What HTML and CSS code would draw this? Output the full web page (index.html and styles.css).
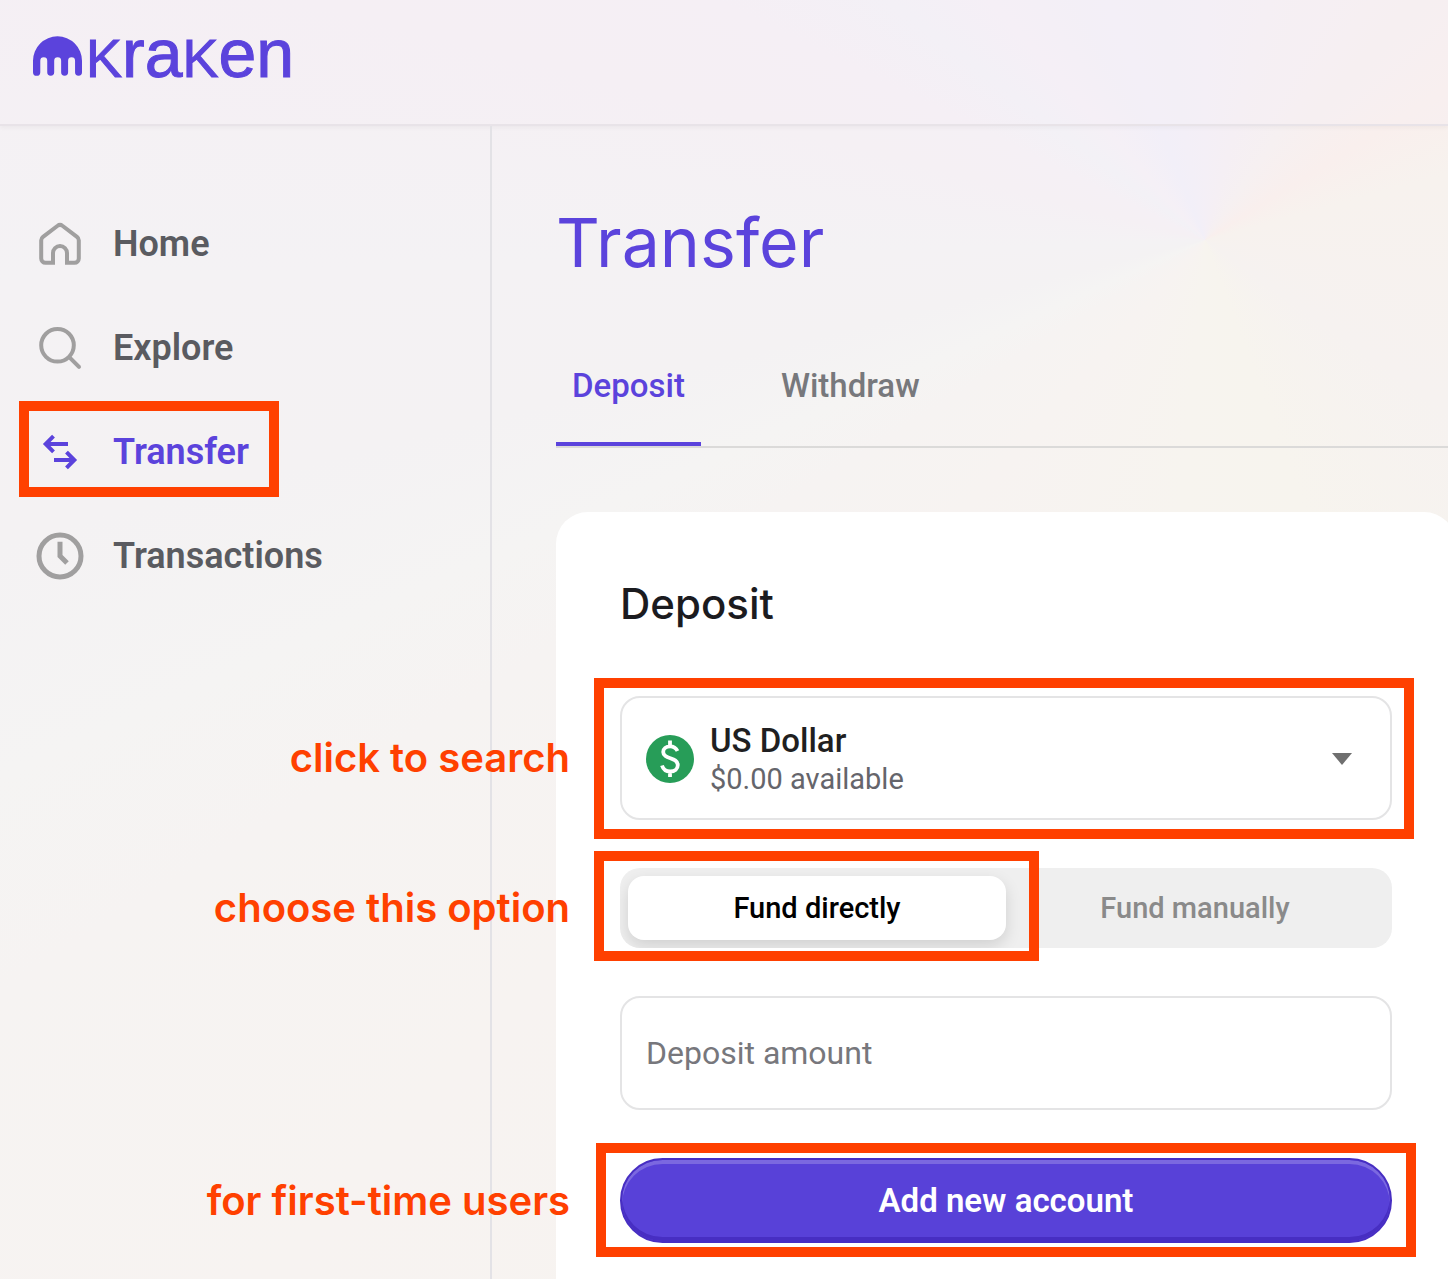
FILE: index.html
```html
<!DOCTYPE html>
<html lang="en">
<head>
<meta charset="utf-8">
<meta name="viewport" content="width=device-width, initial-scale=1">
<title>Transfer – Kraken</title>
<link rel="stylesheet" href="styles.css">
</head>
<body>
<header class="header">
  <a class="logo" href="#" aria-label="Kraken">
    <svg class="logo-mark" viewBox="0 0 148 119" aria-hidden="true"><path d="M0 74A74 74 0 0 1 148 74V108.500a10.500 10.500 0 0 1-21 0V74a10.500 10.500 0 0 0-21 0V108.500a10.500 10.500 0 0 1-21 0V74a10.500 10.500 0 0 0-21 0V108.500a10.500 10.500 0 0 1-21 0V74a10.500 10.500 0 0 0-21 0V108.500a10.500 10.500 0 0 1-22 0Z"/></svg>
    <span class="logo-text"><span class="logo-cap">K</span>ra<span class="logo-cap">K</span>en</span>
  </a>
</header>
<div class="layout">
  <nav class="sidebar" aria-label="Main">
    <a class="nav-link" href="#">
      <svg class="nav-icon" viewBox="0 0 48 48" aria-hidden="true"><path d="M17 42.800H9.500a4.300 4.300 0 0 1-4.300-4.300V20.400a4.500 4.500 0 0 1 1.800-3.500L21.600 5.800a3.800 3.800 0 0 1 4.800 0L41 16.900a4.500 4.500 0 0 1 1.800 3.500V38.500a4.300 4.300 0 0 1-4.300 4.300H31V33a7 7 0 0 0-14 0Z"/></svg>
      <span>Home</span>
    </a>
    <a class="nav-link" href="#">
      <svg class="nav-icon" viewBox="0 0 48 48" aria-hidden="true"><circle cx="21.500" cy="21.300" r="16.300"/><path d="M33.500 33.300L43 42.800" stroke-linecap="round"/></svg>
      <span>Explore</span>
    </a>
    <a class="nav-link nav-link-active" href="#" aria-current="page">
      <svg class="nav-icon" viewBox="0 0 48 48" aria-hidden="true"><path d="M17.500 8.200L9.700 16l7.800 7.800M10 16H32M30.500 24.200L38.300 32l-7.800 7.800M38 32H18"/></svg>
      <span>Transfer</span>
      <span class="highlight highlight-nav"></span>
    </a>
    <a class="nav-link" href="#">
      <svg class="nav-icon nav-icon-bold" viewBox="0 0 48 48" aria-hidden="true"><circle cx="24" cy="24" r="21"/><path d="M24 9.700V24L31 31"/></svg>
      <span>Transactions</span>
    </a>
  </nav>
  <main class="main">
    <div class="content">
      <h1 class="title">Transfer</h1>
      <div class="tabs" role="tablist">
        <button class="tab tab-active" type="button" role="tab" aria-selected="true">Deposit</button>
        <button class="tab" type="button" role="tab" aria-selected="false">Withdraw</button>
      </div>
      <section class="card">
        <h2 class="card-title">Deposit</h2>
        <form class="form">
          <div class="field">
            <button class="currency" type="button" aria-haspopup="listbox">
              <svg class="currency-icon" viewBox="0 0 48 48" aria-hidden="true"><circle cx="24" cy="24" r="24" fill="#279d58"/><path d="M31.500 16c-1.500-3-4-4.600-7.300-4.600-4.200 0-7 2.200-7 5.500 0 7.800 14.600 5 14.600 13.200 0 3.800-3.100 6.400-7.600 6.400-4.100 0-7-2.100-8.200-6M24 5.500V12M24 36V42" fill="none" stroke="#fff" stroke-width="3.800"/></svg>
              <span class="currency-text">
                <span class="currency-name">US Dollar</span>
                <span class="currency-balance">$0.00 available</span>
              </span>
              <svg class="caret" viewBox="0 0 20 12" aria-hidden="true"><path d="M0 0H20L10 12Z"/></svg>
            </button>
            <span class="highlight highlight-currency"></span>
            <span class="note">click to search</span>
          </div>
          <div class="field">
            <div class="segmented">
              <button class="segment segment-active" type="button" aria-pressed="true">Fund directly</button>
              <button class="segment" type="button" aria-pressed="false">Fund manually</button>
            </div>
            <span class="highlight highlight-segment"></span>
            <span class="note">choose this option</span>
          </div>
          <input class="amount" type="text" placeholder="Deposit amount" aria-label="Deposit amount">
          <div class="field">
            <button class="submit" type="button">Add new account</button>
            <span class="highlight highlight-submit"></span>
            <span class="note">for first-time users</span>
          </div>
        </form>
      </section>
    </div>
  </main>
</div>
</body>
</html>
```
FILE: styles.css
```css
:root {
  --purple: #5b43dc;
  --orange: #ff4000;
  --line: #e4e4e5;
}

* {
  box-sizing: border-box;
}

body {
  margin: 0;
  min-height: 100vh;
  display: flex;
  flex-direction: column;
  overflow-x: hidden;
  font-family: Roboto, "Noto Sans", sans-serif;
  color: #1b1b1f;
  background: conic-gradient(from 0deg at 1205px 240px, #f4eff6 0deg, #f5eff4 15deg, #f6f0f1 35deg, #f9efed 58deg, #f7f2ee 75deg, #f6f2f0 125deg, #f7f4ee 160deg, #f7f4ef 185deg, #f7f3f1 222deg, #f6f3f2 238deg, #f5f4f3 246deg, #f4f2f3 256deg, #f4f2f4 268deg, #f5f0f4 285deg, #f5f0f5 296deg, #f3f1f6 307deg, #f5f0f6 318deg, #f2eff8 338deg, #f4eff6 360deg);
}

button,
input {
  font-family: inherit;
  margin: 0;
}

.header {
  flex: none;
  height: 126px;
  padding: 17px 33px;
  background: #f5f0f54d;
  border-bottom: 2px solid #e8e3e8;
  box-shadow: 0 2px 4px #0000000a;
}

.logo {
  display: inline-flex;
  align-items: center;
  gap: 4px;
  color: var(--purple);
  text-decoration: none;
}

.logo-mark {
  width: 49px;
  height: 40px;
  fill: currentColor;
}

.logo-text {
  font-family: "Liberation Sans", sans-serif;
  font-size: 68px;
  line-height: 72px;
  -webkit-text-stroke: 1px currentColor;
}

.logo-cap {
  font-size: 54px;
}

.layout {
  flex: 1;
  display: flex;
}

.sidebar {
  flex: none;
  width: 492px;
  padding-top: 66px;
  border-right: 2px solid #e3e2e6;
}

.nav-link {
  position: relative;
  display: flex;
  align-items: center;
  gap: 29px;
  height: 104px;
  padding-left: 36px;
  color: #5a5b60;
  font-size: 36px;
  font-weight: 600;
  text-decoration: none;
}

.nav-icon {
  width: 48px;
  height: 48px;
  fill: none;
  stroke: #a09f9f;
  stroke-width: 4;
}

.nav-icon-bold {
  stroke-width: 5;
}

.nav-link-active {
  color: var(--purple);
}

.nav-link-active .nav-icon {
  stroke: currentColor;
}

.main {
  flex: 1;
  display: flex;
  min-width: 0;
  padding: 76px 0 0 64px;
}

.content {
  flex: 1;
  display: flex;
  flex-direction: column;
  margin-right: -8px;
}

.title {
  margin: 0 0 64px;
  color: var(--purple);
  font-family: Inter, sans-serif;
  font-size: 68px;
  font-weight: 400;
  line-height: 80px;
}

.tabs {
  display: flex;
  gap: 64px;
  border-bottom: 2px solid #dbdad9;
}

.tab {
  padding: 20px 16px 36px;
  border: 0;
  border-bottom: 4px solid transparent;
  background: none;
  color: #77787c;
  font-size: 33px;
  font-weight: 500;
  line-height: 40px;
}

.tab-active {
  color: var(--purple);
  border-bottom-color: var(--purple);
}

.card {
  flex: 1;
  margin-top: 64px;
  padding: 64px 64px 36px;
  border-radius: 32px 32px 0 0;
  background: #fff;
}

.card-title {
  margin: 0 0 64px;
  font-family: Inter, sans-serif;
  font-size: 42px;
  font-weight: 500;
  line-height: 56px;
}

.form {
  display: flex;
  flex-direction: column;
  gap: 48px;
}

.field {
  position: relative;
}

.currency {
  display: flex;
  align-items: center;
  gap: 16px;
  width: 100%;
  height: 124px;
  padding: 2px 38px 0 24px;
  border: 2px solid var(--line);
  border-radius: 20px;
  background: #fff;
  text-align: left;
}

.currency-icon {
  width: 48px;
  height: 48px;
}

.currency-text {
  flex: 1;
  display: flex;
  flex-direction: column;
}

.currency-name {
  color: #1f1f21;
  font-size: 33px;
  font-weight: 500;
  line-height: 40px;
}

.currency-balance {
  color: #65656b;
  font-size: 29px;
  line-height: 36px;
}

.caret {
  width: 20px;
  height: 12px;
  fill: #6f6f6f;
}

.segmented {
  display: flex;
  height: 80px;
  padding: 8px;
  border-radius: 20px;
  background: #efefef;
  overflow: hidden;
}

.segment {
  flex: 1;
  padding: 0;
  border: 0;
  border-radius: 16px;
  background: none;
  color: #8a8a8a;
  font-size: 29px;
  font-weight: 500;
}

.segment-active {
  background: #fff;
  color: #000;
  box-shadow: 0 6px 16px #00000021;
}

.amount {
  width: 100%;
  height: 114px;
  padding: 0 24px;
  border: 2px solid var(--line);
  border-radius: 20px;
  background: #fff;
  font-size: 32px;
}

.amount::placeholder {
  color: #77777c;
  opacity: 1;
}

.submit {
  display: block;
  width: 100%;
  height: 85px;
  border: 2px solid #472ec2;
  border-radius: 43px;
  background: #5841d8;
  box-shadow: inset 0 4px #7b68e0, inset 0 -4px #472ec2;
  color: #fff;
  font-size: 33px;
  font-weight: 600;
}

/* Guide overlays: boxes and notes drawn over the controls */
.highlight {
  position: absolute;
  border: 10px solid var(--orange);
  pointer-events: none;
}

.highlight-nav {
  top: 1px;
  bottom: 7px;
  left: 19px;
  width: 260px;
}

.highlight-currency {
  inset: -18px -22px -19px -26px;
}

.highlight-segment {
  inset: -17px auto -13px -26px;
  width: 445px;
}

.highlight-submit {
  inset: -15px -24px -14px;
}

.note {
  position: absolute;
  top: 50%;
  right: 100%;
  margin: -24px 50px 0 0;
  color: var(--orange);
  font-family: Inter, sans-serif;
  font-size: 40px;
  font-weight: 600;
  line-height: 48px;
  white-space: nowrap;
}
```
